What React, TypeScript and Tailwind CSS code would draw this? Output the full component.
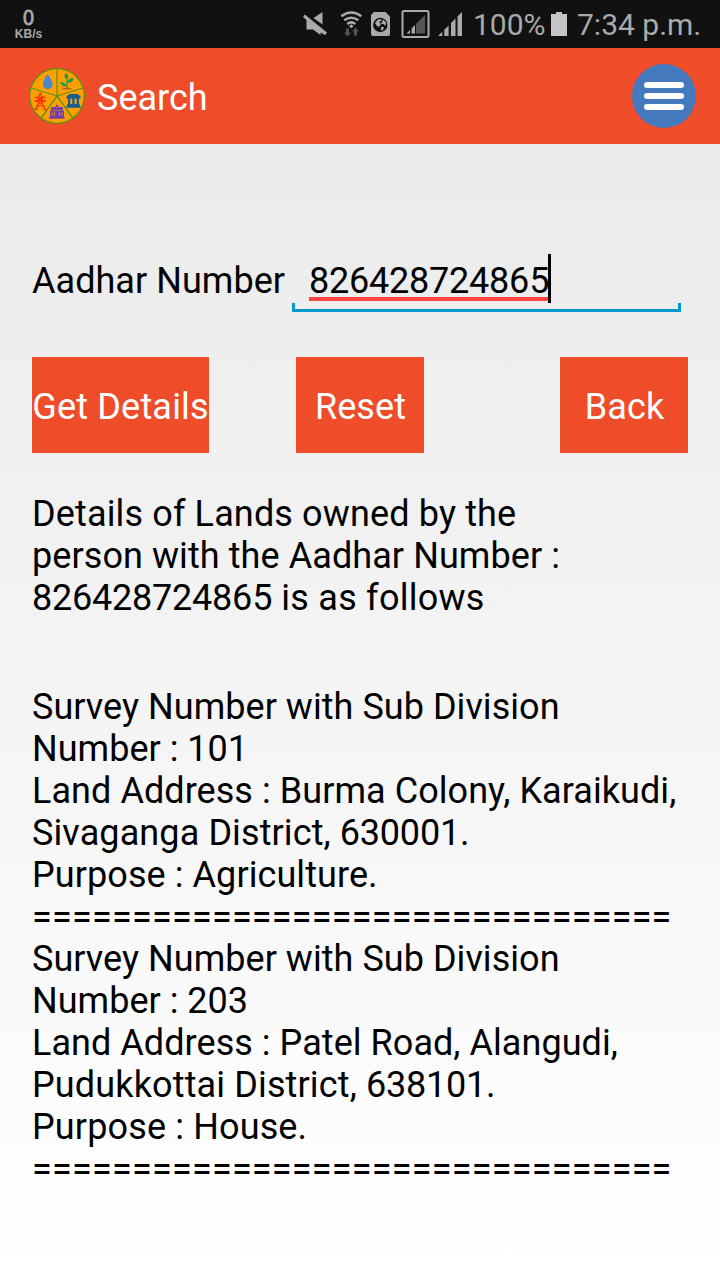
import React, { useState } from 'react';
import clsx from 'clsx';

interface TextLine {
  text: React.ReactNode;
  spacing?: string;
}

const SEPARATOR = '='.repeat(32);

// Digits sit on a 20px grid
const Digits: React.FC<{ children: string }> = ({ children }) => (
  <span className="tracking-[-0.22px]">{children}</span>
);

const summaryLines: TextLine[] = [
  { text: 'Details of Lands owned by the', spacing: 'tracking-[0.14px]' },
  { text: 'person with the Aadhar Number :', spacing: 'tracking-[0.08px]' },
  { text: <><Digits>826428724865</Digits> is as follows</>, spacing: 'tracking-[0.24px]' },
];

const recordLines: TextLine[] = [
  { text: 'Survey Number with Sub Division', spacing: 'tracking-[0.04px]' },
  { text: 'Number : 101', spacing: 'tracking-[0.02px]' },
  { text: 'Land Address : Burma Colony, Karaikudi,', spacing: 'tracking-[0.06px]' },
  { text: <>Sivaganga District, <Digits>630001.</Digits></>, spacing: 'tracking-[0.11px]' },
  { text: 'Purpose : Agriculture.', spacing: 'tracking-[0.08px]' },
  { text: SEPARATOR, spacing: 'tracking-[0.23px]' },
  { text: 'Survey Number with Sub Division', spacing: 'tracking-[0.04px]' },
  { text: 'Number : 203', spacing: 'tracking-[0.02px]' },
  { text: 'Land Address : Patel Road, Alangudi,', spacing: 'tracking-[0.05px]' },
  { text: <>Pudukkottai District, <Digits>638101.</Digits></>, spacing: 'tracking-[0.14px]' },
  { text: 'Purpose : House.', spacing: 'tracking-[0.14px]' },
  { text: SEPARATOR, spacing: 'tracking-[0.23px]' },
];

const StatusBar: React.FC = () => (
  <div className="flex h-12 items-center bg-[#111111] text-[#aaaaaa]">
    {/* Network speed */}
    <div className="ml-3.5 w-[29px] text-center font-['Liberation_Sans'] font-bold">
      <div className="scale-x-90 text-[22px] leading-[18px] font-normal [-webkit-text-stroke:0.8px_#aaaaaa]">0</div>
      <div className="pt-px text-[12px] leading-[12px]">KB/s</div>
    </div>

    {/* Sound, wifi, SIM and signal */}
    <svg className="ml-[257px] h-12 w-[190px] shrink-0" viewBox="300 0 190 48" fill="none">
      <path d="M322.500 12v12.500L313.500 18z" fill="#aaa" />
      <path d="M303 17l1.800-2.500L327 32.500l-1.800 2.500-4.700-2.500v2.500l-7.500-5.500h-6.500v-9.500z" fill="#aaa" />
      <g stroke="#aaa" strokeWidth="2.500">
        <path d="M341.300 16.200q10-7.400 20 0" />
        <path d="M344.300 20.200q7-5 14 0" />
        <path d="M347.200 24q4.100-3.200 8.200 0" />
      </g>
      <circle cx="351.300" cy="26.300" r="1.700" fill="#aaa" />
      <path d="M346 28.500h3v4h2l-3.500 4-3.500-4h2zM354 35.500v-4h-2l3.500-4 3.500 4h-2v4z" fill="#555" />
      <path d="M374 12h11.500l4.500 4.500v17.500q0 2-2 2h-15q-2 0-2-2V15z" fill="#aaa" />
      <circle cx="380.300" cy="25" r="7.200" fill="#111" />
      <path d="M375 23l3-3.500 3.500-.5-.5 2-2 1 2 2-2 3-2-1zM383 19.500l3 3-.5 3.500-2-2-2.500 0 1-2zM381 27l3 0-1 3-2 .5z" fill="#aaa" />
      <rect x="402.500" y="11" width="26" height="26" rx="1.500" stroke="#aaa" strokeWidth="2" />
      <path d="M416 33.500v-9.500L425 15v18.500z" fill="#555" />
      <path d="M406.500 33.500l3.500-3.500v3.500zM411.500 33.500v-5l3.500-3.500v8.500z" fill="#aaa" />
      <path d="M438 36l4.300-4.300v4.300zM444.300 36v-6.300l4.300-4.300V36zM451 36V23l4.500-4.500V36zM457.500 36V16.500l4.500-4.500v24z" fill="#aaa" />
    </svg>
    <span className="-ml-[17px] w-[78px] shrink-0 pt-0.5 text-[30px] leading-none whitespace-nowrap">100%</span>
    <svg className="h-12 w-4 shrink-0" viewBox="0 0 16 48">
      <path d="M0 14h5v-2h6v2h5v22H0z" fill="#c4c4c4" />
    </svg>
    <span className="ml-[10px] pt-0.5 text-[30px] leading-none whitespace-nowrap">7:34 p.m.</span>
  </div>
);

const Logo: React.FC = () => (
  <svg className="h-14 w-14" viewBox="29 68 56 56">
    <g stroke="#5c9410" strokeWidth="1.300" fill="none">
      <circle cx="57" cy="96" r="27.300" fill="#ffa000" />
      <path d="M57 96V69M57 96l26-8M57 96l15.800 22M57 96l-15.800 22M57 96l-26-8" />
    </g>
    {/* Water */}
    <path d="M47.700 74q-4.900 7-4.900 10.300a4.900 4.900 0 0 0 9.800 0q0-3.300-4.900-10.300z" fill="#4a87cf" />
    {/* Farming */}
    <path d="M67 88.500v-9" stroke="#279844" strokeWidth="1.300" fill="none" />
    <path d="M67 80q-4.500-4-1-7 4 3 1 7zM67.500 83q0-5 6-5 0 5-6 5zM66.500 86.500q-5.500 0-6.500-4.500 6 0 6.500 4.500z" fill="#279844" />
    <path d="M61 89.500q2-1.500 4-1.500 2-1 4 0 2 0 4 1.500z" fill="#9b6a22" />
    {/* Public office */}
    <path d="M66.500 98.500v-2l3-2.500h8l3 2.500v2zM67.500 104h12l1.500 3.700H66zM68 98.500h2.300v6H68zM72.300 98.500h2.300v6h-2.300zM76.700 98.500H79v6h-2.300z" fill="#155f92" />
    {/* School */}
    <path d="M49 118.700v-1.700h1v-6h1v-4h4.200l1.800-3 1.800 3H63v4h1v6h.700v1.700z" fill="#743fa0" />
    <path d="M51.500 112.500h1v3h-1zM54 112.500h1v3h-1zM59 112.500h1v3h-1zM61.500 112.500h1v3h-1zM52 110h10v.6H52zM56.500 106.500h1.200v1.200h-1.200z" fill="#e8951e" />
    {/* Power */}
    <path d="M40.300 93l-1.500 3.500-4 1.200h11l-4-1.200zM34.500 101.500l4-2h3.600l4 2zM38.800 96.500l-.3 6-3 7M41.800 96.500l.3 6 3 7M38.500 102.500l5 4.500M42.100 102.500l-5 4.500M38.800 97l3.200 5M41.800 97l-3.200 5M34 109.500h4M43 109.500h4" stroke="#f9330b" strokeWidth="1.200" fill="none" />
  </svg>
);

const ActionButton: React.FC<{ label: string; className: string; onClick?: () => void }> = ({
  label,
  className,
  onClick,
}) => (
  <button
    onClick={onClick}
    className={clsx('h-24 bg-[#ef4c2a] pt-1 text-center text-[36px] whitespace-nowrap text-white', className)}
  >
    {label}
  </button>
);

const Lines: React.FC<{ lines: TextLine[]; className?: string }> = ({ lines, className }) => (
  <div className={clsx('text-[36px] leading-[42px] whitespace-nowrap', className)}>
    {lines.map((line, i) => (
      <p key={i} className={line.spacing}>
        {line.text}
      </p>
    ))}
  </div>
);

export default function App() {
  const [aadhar, setAadhar] = useState('826428724865');

  return (
    <div className="flex h-[1280px] w-[720px] flex-col overflow-hidden bg-linear-to-b from-[#e8e8e8] to-white font-[Roboto,sans-serif] text-black">
      <StatusBar />

      {/* Title bar */}
      <header className="flex h-24 items-center bg-[#ef4c2a] pr-6 pl-[29px]">
        <Logo />
        <h1 className="ml-3 pt-1 text-[36px] leading-[42px] text-white">Search</h1>
        <button className="ml-auto flex size-16 flex-col items-center justify-center gap-[5px] rounded-full bg-[#4479bd]">
          <span className="h-1.5 w-10 rounded-full bg-white" />
          <span className="h-1.5 w-10 rounded-full bg-white" />
          <span className="h-1.5 w-10 rounded-full bg-white" />
        </button>
      </header>

      {/* Aadhar number field */}
      <div className="mt-[110px] flex h-[58px] pl-8 text-[36px] leading-[42px] whitespace-nowrap">
        <label className="w-[260px] pt-[6px] tracking-[0.04px]">Aadhar Number</label>
        <div className="flex h-[58px] w-[389px] flex-col">
          <div className="flex h-[49px] pl-[17px]">
            <span className="mt-[6px] h-[41px] w-[240px] border-b-4 border-[#ff4444] tracking-[-0.22px]">{aadhar}</span>
            <span className="-ml-px h-[49px] w-[3px] bg-black" />
          </div>
          <div className="h-[9px] border-x-3 border-b-3 border-[#0099cc]" />
        </div>
      </div>

      {/* Actions */}
      <div className="mt-[45px] flex pl-8">
        <ActionButton label="Get Details" className="w-[177px] tracking-[0.2px]" />
        <ActionButton label="Reset" className="ml-[87px] w-32 pl-px tracking-[0.1px]" onClick={() => setAadhar('')} />
        <ActionButton label="Back" className="ml-[136px] w-32 pl-px tracking-[0.1px]" />
      </div>

      {/* Results */}
      <Lines lines={summaryLines} className="mt-10 pl-8" />
      <Lines lines={recordLines} className="mt-[67px] pl-8" />
    </div>
  );
}
